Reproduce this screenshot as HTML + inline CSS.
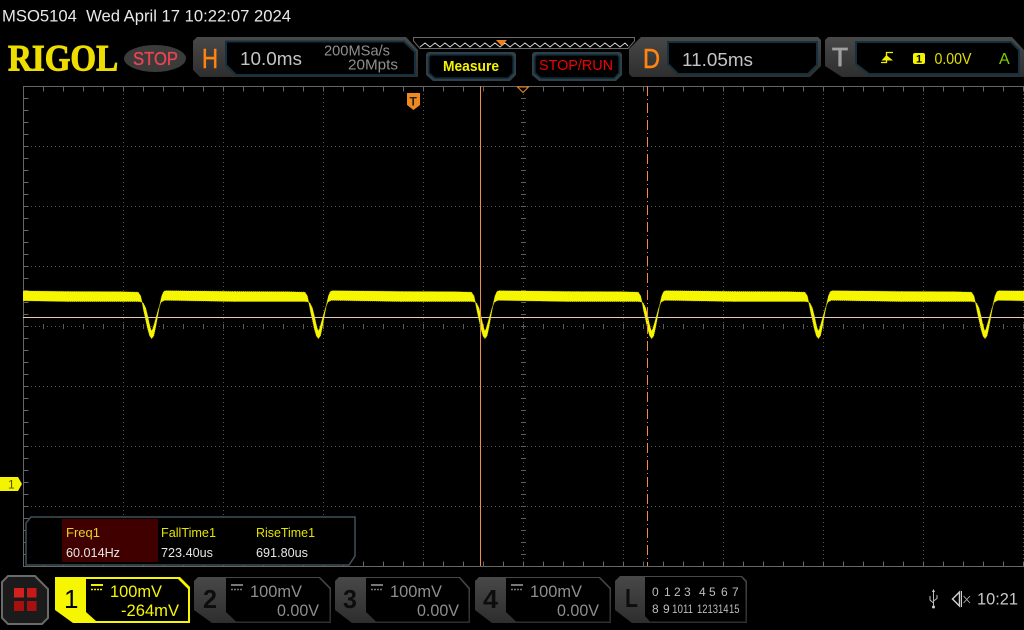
<!DOCTYPE html>
<html><head><meta charset="utf-8"><style>
html,body{margin:0;padding:0;background:#000;width:1024px;height:630px;overflow:hidden}
svg{display:block}
text{font-family:"Liberation Sans",sans-serif}
</style></head><body>
<svg width="1024" height="630" viewBox="0 0 1024 630" xmlns="http://www.w3.org/2000/svg">
<defs>
<linearGradient id="g" x1="0" y1="0" x2="0" y2="1"><stop offset="0" stop-color="#484848"/><stop offset="1" stop-color="#2e2e2e"/></linearGradient>
<clipPath id="plot"><rect x="23" y="86" width="1001" height="481"/></clipPath>
<path id="seg" d="M-83.400 291.500L-30 291.800L-13.500 292.200L-11 296L-9.500 303L-8 311L-6 320L-4 329L-2 336L0 338.500L2 336L4 327L6 316L8 305L10 296L12 291.500L14 290.800L40 291L83.400 291.500L83.400 301.500L40 300.800L13 300.300L9.500 302L7 308L4.500 317L2.500 324L1 329L0 331L-1 329L-2.500 323L-4 316L-6 308L-8.500 303L-11 301.800L-14 301.500L-40 301.500L-83.400 301.500Z"/>
</defs>
<rect width="1024" height="630" fill="#000"/>
<text x="2" y="21.500" font-size="16.500" fill="#e8e8e8" textLength="289" lengthAdjust="spacingAndGlyphs" xml:space="preserve">MSO5104  Wed April 17 10:22:07 2024</text>

<!-- logo -->
<text transform="translate(8,70.500) scale(1.08,1.2)" font-size="31" font-weight="bold" fill="#eedd00" stroke="#eedd00" stroke-width=".8" textLength="102" lengthAdjust="spacingAndGlyphs" style="font-family:'Liberation Serif',serif">RIGOL</text>
<ellipse cx="155" cy="58.500" rx="31" ry="13.500" fill="#3b3b3b"/>
<text x="133" y="65" font-size="18" fill="#f0434f" stroke="#f0434f" stroke-width=".3" textLength="45" lengthAdjust="spacingAndGlyphs">STOP</text>

<!-- H panel -->
<polygon points="197,37 406,37 418,50 418,77 200,77 193,70 193,41" fill="url(#g)"/>
<polygon points="226,41.500 404,41.500 415,52 415,75 236,75 226,65" fill="#000" stroke="#15303e" stroke-width="2"/>
<text x="202" y="68" font-size="28" fill="#ff8410" stroke="#ff8410" stroke-width=".5" textLength="16" lengthAdjust="spacingAndGlyphs">H</text>
<text x="240" y="65" font-size="18.500" fill="#c4c4c4" textLength="62" lengthAdjust="spacingAndGlyphs">10.0ms</text>
<text x="324" y="55.500" font-size="15" fill="#8f8f8f" textLength="66" lengthAdjust="spacingAndGlyphs">200MSa/s</text>
<text x="348" y="69.500" font-size="15" fill="#8f8f8f" textLength="50" lengthAdjust="spacingAndGlyphs">20Mpts</text>

<!-- wave -->
<polygon points="413.500,37.500 634.500,37.500 634.500,41 628,48.500 420,48.500 413.500,41" fill="#000" stroke="#6a6a6a"/>
<polyline points="420,47 425,43 430,47 435,43 440,47 445,43 450,47 455,43 460,47 465,43 470,47 475,43 480,47 485,43 490,47 495,43 500,47 505,43 510,47 515,43 520,47 525,43 530,47 535,43 540,47 545,43 550,47 555,43 560,47 565,43 570,47 575,43 580,47 585,43 590,47 595,43 600,47 605,43 610,47 615,43 620,47 625,43 628,46" fill="none" stroke="#d4d4d4"/>
<polygon points="496,40 507,40 501.500,46" fill="#f08010"/>

<!-- Measure / STOP-RUN -->
<polygon points="428,52 514,52 516,54 516,75 510,81 433,81 426,75 426,54" fill="#2f3f47"/>
<polygon points="431,55 511,55 513,57 513,73 508,78 435,78 429,73 429,57" fill="#000" stroke="#0f2733" stroke-width="1.500"/>
<text x="443" y="71" font-size="15" font-weight="bold" fill="#f4f400" textLength="56" lengthAdjust="spacingAndGlyphs">Measure</text>
<polygon points="534,52 620,52 622,54 622,75 616,81 539,81 532,75 532,54" fill="#2f3f47"/>
<polygon points="537,55 617,55 619,57 619,73 614,78 541,78 535,73 535,57" fill="#000" stroke="#0f2733" stroke-width="1.500"/>
<text x="539" y="70" font-size="15" fill="#f40000" textLength="74" lengthAdjust="spacingAndGlyphs">STOP/RUN</text>

<!-- D panel -->
<polygon points="641,37 818,37 821,40 821,66 810,77 632,77 629,74 629,49" fill="url(#g)"/>
<polygon points="668,42 817,42 817,65 808,74 678,74 668,64" fill="#000" stroke="#15303e" stroke-width="2"/>
<text x="643" y="68" font-size="28" fill="#ff8410" stroke="#ff8410" stroke-width=".5" textLength="17" lengthAdjust="spacingAndGlyphs">D</text>
<text x="682" y="66" font-size="18.500" fill="#c4c4c4" textLength="71" lengthAdjust="spacingAndGlyphs">11.05ms</text>

<!-- T panel -->
<polygon points="828,37 1012,37 1024,50 1024,77 842,77 825,66 825,40" fill="url(#g)"/>
<polygon points="856,42 1011,42 1019,50 1019,74 869,74 856,64" fill="#000" stroke="#15303e" stroke-width="2"/>
<text x="832" y="66" font-size="26" fill="#a0a0a0" stroke="#a0a0a0" stroke-width=".8" textLength="16" lengthAdjust="spacingAndGlyphs">T</text>
<path d="M893 52.500H886.500V62.500H881" fill="none" stroke="#f0f000" stroke-width="1.300"/>
<path d="M881.500 60.500L886.500 55 893 60.500Z" fill="#f0f000"/>
<rect x="913" y="53" width="12" height="11" rx="2" fill="#f4f400"/>
<text x="916" y="62.500" font-size="11" font-weight="bold" fill="#000">1</text>
<text x="934.500" y="64" font-size="16" fill="#e0e000" textLength="37" lengthAdjust="spacingAndGlyphs">0.00V</text>
<text x="999" y="64" font-size="16" fill="#7fd000">A</text>

<!-- grid -->
<g fill="none" stroke="#666">
<path d="M23.500 566.500V86.500H1024"/>
<path d="M23 566.500H1024"/>
<path d="M23 146.500H1024M23 206.500H1024M23 266.500H1024M23 326.500H1024M23 386.500H1024M23 446.500H1024M23 506.500H1024" stroke-dasharray="1 3" stroke="#565656"/>
<path d="M123.500 86V566M223.500 86V566M323.500 86V566M423.500 86V566M523.500 86V566M623.500 86V566M723.500 86V566M823.500 86V566M923.500 86V566M1023.500 86V566" stroke-dasharray="1 3" stroke="#565656"/>
<!-- border ticks -->
<path d="M23 89H1024" stroke-width="5" stroke-dasharray="1 19" stroke-dashoffset="-20"/>
<path d="M23 564H1024" stroke-width="5" stroke-dasharray="1 19" stroke-dashoffset="-20"/>
<path d="M26 86V566" stroke-width="5" stroke-dasharray="1 11" stroke-dashoffset="-12"/>
<!-- centre axis ticks -->
<path d="M23 326.500H1024" stroke-width="5" stroke-dasharray="1 19" stroke-dashoffset="-20" stroke="#5c5c5c"/>
<path d="M523.500 86V566" stroke-width="5" stroke-dasharray="1 11" stroke-dashoffset="-12" stroke="#5c5c5c"/>
</g>

<!-- trace -->
<g clip-path="url(#plot)">
<g fill="#f6f600" stroke="#8e8e00" stroke-width="1" stroke-dasharray="1 1">
<use href="#seg" x="-15"/><use href="#seg" x="151.700"/><use href="#seg" x="318.400"/><use href="#seg" x="485"/><use href="#seg" x="651.700"/><use href="#seg" x="818.400"/><use href="#seg" x="985"/>
</g>
<g fill="#f6f600">
<use href="#seg" x="-15"/><use href="#seg" x="151.700"/><use href="#seg" x="318.400"/><use href="#seg" x="485"/><use href="#seg" x="651.700"/><use href="#seg" x="818.400"/><use href="#seg" x="985"/>
</g>
</g>

<!-- cursors -->
<path d="M23 317.500H1024" stroke="#eccba8" stroke-width="1"/>
<path d="M480.500 86V566" stroke="#f28b4a" stroke-width="1"/>
<path d="M647.500 86V566" stroke="#f28b4a" stroke-width="1" stroke-dasharray="10 3 1 3"/>
<polygon points="517.500,87 528.500,87 523,92.500" fill="#000" stroke="#f08a20"/>
<polygon points="407,93 420,93 420,105 413.500,110 407,105" fill="#f08a20"/>
<text x="409.500" y="105.500" font-size="12" font-weight="bold" fill="#222">T</text>

<!-- CH marker -->
<polygon points="0,477 18,477 22,484 18,491 0,491" fill="#f4f400"/>
<text x="8" y="488.500" font-size="12" fill="#555500">1</text>

<!-- measure panel -->
<polygon points="31,517 355,517 355,556 349,565 26,565 26,523" fill="#000" stroke="#3f5058" stroke-width="1.500"/>
<rect x="62" y="519" width="96" height="43" fill="#400000"/>
<g font-size="12.500">
<text x="66" y="537" fill="#e3d32a" textLength="34" lengthAdjust="spacingAndGlyphs">Freq1</text>
<text x="161" y="537" fill="#e3e300" textLength="55" lengthAdjust="spacingAndGlyphs">FallTime1</text>
<text x="256" y="537" fill="#e3e300" textLength="59" lengthAdjust="spacingAndGlyphs">RiseTime1</text>
<text x="66" y="557" fill="#e6e6e6" textLength="54" lengthAdjust="spacingAndGlyphs">60.014Hz</text>
<text x="161" y="557" fill="#e6e6e6" textLength="52" lengthAdjust="spacingAndGlyphs">723.40us</text>
<text x="256" y="557" fill="#e6e6e6" textLength="52" lengthAdjust="spacingAndGlyphs">691.80us</text>
</g>

<!-- menu button -->
<polygon points="8,576 35,576 48,589 48,618 42,624 8,624 2,618 2,582" fill="#1b1b1b" stroke="#6a6a6a" stroke-width="2"/>
<rect x="14" y="588" width="10" height="9.500" fill="#d62020"/>
<rect x="27" y="588" width="9.500" height="9.500" fill="#c81818"/>
<rect x="14" y="601" width="10" height="10" fill="#a81010"/>
<rect x="27" y="601" width="9.500" height="10" fill="#a81010"/>

<!-- CH1 -->
<polygon points="55,577 180,577 190,587 190,623 73,623 55,610" fill="#f6f600"/>
<polygon points="86,579 178,579 188,589 188,621 96,621 86,612" fill="#000"/>
<text x="64" y="608" font-size="26" fill="#000">1</text>
<path d="M91 585H103" stroke="#f0f000" stroke-width="2"/><path d="M91 589.500H103" stroke="#f0f000" stroke-width="1.500" stroke-dasharray="2 1"/>
<text x="110" y="597" font-size="17" fill="#f6f600" textLength="52" lengthAdjust="spacingAndGlyphs">100mV</text>
<text x="121" y="616" font-size="17" fill="#f6f600" textLength="58" lengthAdjust="spacingAndGlyphs">-264mV</text>

<!-- CH2 -->
<polygon points="198,577 320,577 331,588 331,623 212,623 194,610 194,581" fill="url(#g)"/>
<polygon points="226,578 319,578 329.500,589 329.500,621.500 236,621.500 226,612" fill="#000"/>
<text x="203" y="608" font-size="26" fill="#0d0d0d" font-weight="bold" textLength="14" lengthAdjust="spacingAndGlyphs">2</text>
<path d="M231 585H243" stroke="#777" stroke-width="2"/><path d="M231 589.500H243" stroke="#777" stroke-width="1.500" stroke-dasharray="2 1"/>
<text x="250" y="597" font-size="17" fill="#8e8e8e" textLength="52" lengthAdjust="spacingAndGlyphs">100mV</text>
<text x="277" y="616" font-size="17" fill="#8e8e8e" textLength="42" lengthAdjust="spacingAndGlyphs">0.00V</text>

<!-- CH3 -->
<polygon points="339,577 460,577 470,588 470,623 352,623 335,610 335,581" fill="url(#g)"/>
<polygon points="366,578 459,578 468.500,589 468.500,621.500 376,621.500 366,612" fill="#000"/>
<text x="343" y="608" font-size="26" fill="#0d0d0d" font-weight="bold" textLength="14" lengthAdjust="spacingAndGlyphs">3</text>
<path d="M371 585H383" stroke="#777" stroke-width="2"/><path d="M371 589.500H383" stroke="#777" stroke-width="1.500" stroke-dasharray="2 1"/>
<text x="390" y="597" font-size="17" fill="#8e8e8e" textLength="52" lengthAdjust="spacingAndGlyphs">100mV</text>
<text x="417" y="616" font-size="17" fill="#8e8e8e" textLength="42" lengthAdjust="spacingAndGlyphs">0.00V</text>

<!-- CH4 -->
<polygon points="479,577 600,577 611,588 611,623 492,623 475,610 475,581" fill="url(#g)"/>
<polygon points="506,578 599,578 609.500,589 609.500,621.500 516,621.500 506,612" fill="#000"/>
<text x="483" y="608" font-size="26" fill="#0d0d0d" font-weight="bold" textLength="15" lengthAdjust="spacingAndGlyphs">4</text>
<path d="M511 585H523" stroke="#777" stroke-width="2"/><path d="M511 589.500H523" stroke="#777" stroke-width="1.500" stroke-dasharray="2 1"/>
<text x="530" y="597" font-size="17" fill="#8e8e8e" textLength="52" lengthAdjust="spacingAndGlyphs">100mV</text>
<text x="557" y="616" font-size="17" fill="#8e8e8e" textLength="42" lengthAdjust="spacingAndGlyphs">0.00V</text>

<!-- L -->
<polygon points="620,576 742,576 747,581 747,623 632,623 615,610 615,581" fill="url(#g)"/>
<polygon points="645,577 741,577 745.500,582 745.500,621.500 650,621.500 645,616" fill="#000"/>
<text x="625" y="607" font-size="26" fill="#0d0d0d" font-weight="bold" textLength="13" lengthAdjust="spacingAndGlyphs">L</text>
<g font-size="12" fill="#bdbdbd">
<text x="652" y="596">0</text><text x="664" y="596">1</text><text x="674" y="596">2</text><text x="684" y="596">3</text>
<text x="699" y="596">4</text><text x="709" y="596">5</text><text x="721" y="596">6</text><text x="732" y="596">7</text>
<text x="652" y="613">8</text><text x="663" y="613">9</text>
<text x="672" y="613" textLength="11" lengthAdjust="spacingAndGlyphs">10</text><text x="683" y="613" textLength="10" lengthAdjust="spacingAndGlyphs">11</text>
<text x="697" y="613" textLength="10.500" lengthAdjust="spacingAndGlyphs">12</text><text x="707.500" y="613" textLength="10.500" lengthAdjust="spacingAndGlyphs">13</text><text x="718" y="613" textLength="10.500" lengthAdjust="spacingAndGlyphs">14</text><text x="729" y="613" textLength="10.500" lengthAdjust="spacingAndGlyphs">15</text>
</g>

<!-- status -->
<path d="M933.500 591V606M930 596V600L933.500 603M937 595V598.500L933.500 601" fill="none" stroke="#bbb" stroke-width="1"/>
<circle cx="933.500" cy="607" r="1.500" fill="#ccc"/>
<path d="M933.500 589L932 592H935Z" fill="#ccc"/>
<path d="M952.500 599L959.500 592V606Z" fill="none" stroke="#ccc" stroke-width="1.500"/>
<path d="M961.500 591V607" stroke="#ccc"/>
<path d="M963.500 596L970 603M970 596L963.500 603" stroke="#bbb" stroke-width=".8"/>
<text x="977" y="604.500" font-size="17" fill="#c8c8c8" textLength="41" lengthAdjust="spacingAndGlyphs">10:21</text>
</svg>
</body></html>
